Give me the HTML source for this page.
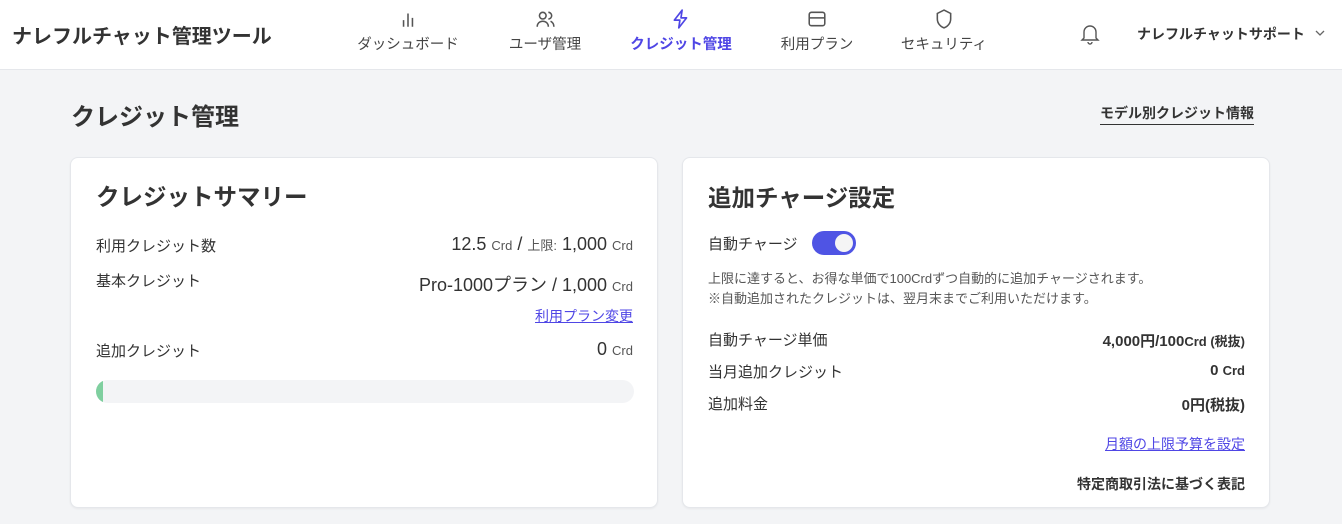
<!DOCTYPE html>
<html><head><meta charset="utf-8"><style>
*{box-sizing:border-box;margin:0;padding:0}
body{width:1342px;height:524px;overflow:hidden;background:#f3f4f6;font-family:"Liberation Sans","Noto Sans CJK JP",sans-serif;color:#333;position:relative}
.hdr{position:absolute;left:0;top:0;width:1342px;height:70px;background:#fff;border-bottom:1px solid #e5e7eb}
.abs{position:absolute;white-space:nowrap}
.nav{position:absolute;top:0;text-align:center;font-size:14.5px;color:#444}
.nav svg{display:block;margin:9px auto 4px}
.card{position:absolute;background:#fff;border:1px solid #e5e7eb;border-radius:8px;box-shadow:0 1px 2px rgba(0,0,0,.05)}
.lbl{font-size:15px;color:#333}
.s{font-size:13px;color:#555}
a{color:#4f46e5;text-decoration:underline;font-size:14px}
</style></head><body>
<div class="hdr">
<div class="abs" style="left:12px;top:20px;font-size:20px;font-weight:bold;color:#333">ナレフルチャット管理ツール</div>
<div class="nav" style="left:355px;width:106px"><svg width="20" height="20" viewBox="0 0 18 18" fill="none" stroke="#555" stroke-width="1.4"><path d="M5 16V10M9 16V4M13 16V8"/></svg>ダッシュボード</div>
<div class="nav" style="left:503px;width:84px"><svg width="20" height="20" viewBox="0 0 18 18" fill="none" stroke="#555" stroke-width="1.4"><circle cx="7" cy="6" r="3"/><path d="M2 16c0-3 2-5 5-5s5 2 5 5M12 3a3 3 0 010 6M14 11c2 1 3 3 3 5"/></svg>ユーザ管理</div>
<div class="nav" style="left:624px;width:114px;color:#4f46e5;font-weight:bold"><svg width="20" height="20" viewBox="0 0 18 18" fill="none" stroke="#4f46e5" stroke-width="1.5" stroke-linejoin="round"><path d="M10 1L3 10h5l-1 7 7-9H9z"/></svg>クレジット管理</div>
<div class="nav" style="left:775px;width:84px"><svg width="20" height="20" viewBox="0 0 18 18" fill="none" stroke="#555" stroke-width="1.4"><rect x="2" y="3" width="14" height="12" rx="2"/><path d="M2 8h14"/></svg>利用プラン</div>
<div class="nav" style="left:896px;width:96px"><svg width="20" height="20" viewBox="0 0 18 18" fill="none" stroke="#555" stroke-width="1.4"><path d="M9 1l6 3v5c0 4-3 7-6 8-3-1-6-4-6-8V4z"/></svg>セキュリティ</div>
<svg class="abs" style="left:1080px;top:23px" width="20" height="22" viewBox="0 0 20 22" fill="none" stroke="#555" stroke-width="1.4"><path d="M4 15V9a6 6 0 0112 0v6l2 2H2zM8 19a2 2 0 004 0"/></svg>
<div class="abs" style="left:1137px;top:24px;font-size:14px;color:#333;font-weight:bold">ナレフルチャットサポート</div>
<svg class="abs" style="left:1314px;top:28px" width="12" height="10" viewBox="0 0 12 10" fill="none" stroke="#666" stroke-width="1.3"><path d="M2 3l4 4 4-4"/></svg>
</div>
<div class="abs" style="left:71px;top:97px;font-size:24px;font-weight:bold;color:#333">クレジット管理</div>
<div class="abs" style="left:1100px;top:103px;font-size:14px;font-weight:bold;color:#333;border-bottom:1px solid #333;padding-bottom:1px">モデル別クレジット情報</div>

<div class="card" style="left:70px;top:157px;width:588px;height:351px">
<div class="abs" style="left:25px;top:20px;font-size:23.5px;font-weight:bold">クレジットサマリー</div>
<div class="abs lbl" style="left:25px;top:77px">利用クレジット数</div>
<div class="abs" style="right:24px;top:76px;font-size:18px">12.5 <span class="s">Crd</span> / <span class="s">上限:</span> 1,000 <span class="s">Crd</span></div>
<div class="abs lbl" style="left:25px;top:112px">基本クレジット</div>
<div class="abs" style="right:24px;top:113px;font-size:18px">Pro-1000プラン / 1,000 <span class="s">Crd</span></div>
<a class="abs" style="right:24px;top:148px">利用プラン変更</a>
<div class="abs lbl" style="left:25px;top:182px">追加クレジット</div>
<div class="abs" style="right:24px;top:181px;font-size:18px">0 <span class="s">Crd</span></div>
<div class="abs" style="left:25px;top:222px;width:538px;height:23px;background:#f3f4f6;border-radius:12px;overflow:hidden"><div style="width:7px;height:23px;background:#7fcf9f"></div></div>
</div>

<div class="card" style="left:682px;top:157px;width:588px;height:351px">
<div class="abs" style="left:25px;top:21px;font-size:23.5px;font-weight:bold">追加チャージ設定</div>
<div class="abs lbl" style="left:25px;top:75px">自動チャージ</div>
<div class="abs" style="left:129px;top:73px;width:44px;height:24px;border-radius:12px;background:#4f54e4"><div style="position:absolute;right:3px;top:3px;width:18px;height:18px;border-radius:50%;background:#f5f5f5"></div></div>
<div class="abs" style="left:25px;top:111px;font-size:13px;color:#555;line-height:20px">上限に達すると、お得な単価で100Crdずつ自動的に追加チャージされます。<br>※自動追加されたクレジットは、翌月末までご利用いただけます。</div>
<div class="abs lbl" style="left:25px;top:171px">自動チャージ単価</div>
<div class="abs" style="right:24px;top:172px;font-size:15px;font-weight:bold">4,000円/100<span style="font-size:13px">Crd (税抜)</span></div>
<div class="abs lbl" style="left:25px;top:203px">当月追加クレジット</div>
<div class="abs" style="right:24px;top:204px;font-size:15px;font-weight:bold">0 <span style="font-size:13px">Crd</span></div>
<div class="abs lbl" style="left:25px;top:235px">追加料金</div>
<div class="abs" style="right:24px;top:236px;font-size:15px;font-weight:bold">0円(税抜)</div>
<a class="abs" style="right:24px;top:276px">月額の上限予算を設定</a>
<div class="abs" style="right:24px;top:316px;font-size:14px;font-weight:bold;color:#333">特定商取引法に基づく表記</div>
</div>
</body></html>
